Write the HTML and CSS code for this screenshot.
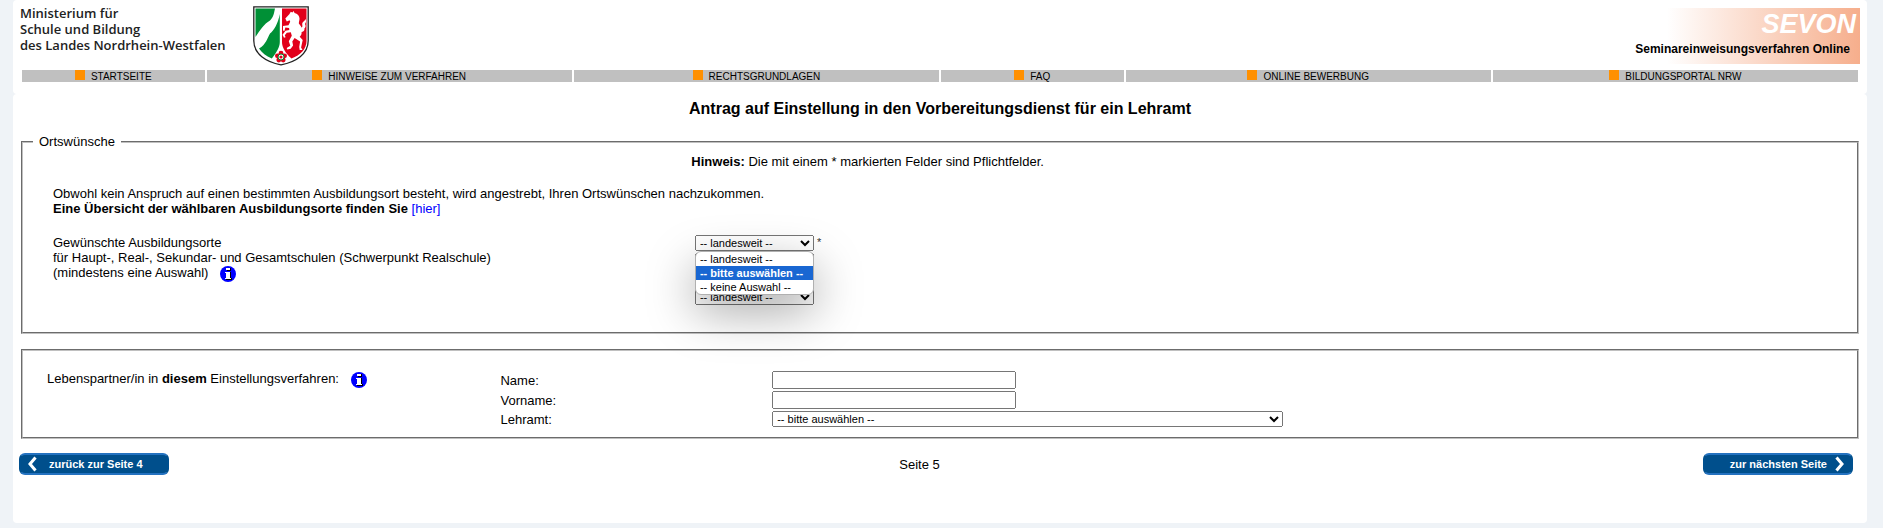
FILE: index.html
```
<!DOCTYPE html>
<html lang="de">

<head>
    <meta charset="UTF-8">
    <meta name="viewport" content="width=device-width, initial-scale=1">
    <title>SEVON - Ortswünsche</title>
    <link rel="stylesheet" href="styles.css">
</head>

<body>
    <header class="card header">
        <div class="masthead">
            <p class="ministry">Ministerium für<br>Schule und Bildung<br>des Landes Nordrhein-Westfalen</p>
            <svg class="crest" width="56" height="60" viewBox="0 0 56 60" aria-hidden="true">
                <path d="M.8.8h54.4v34C55.200 48 43 56 28 58.800 13 56 .8 48 .8 34.800z" fill="#fff" stroke="#222" stroke-width="1.300" />
                <path d="M2.500 2.500H22c-1 4-1 8-5 12C11 18 7 24 2.500 31z" fill="#009036" />
                <path d="M26.800 8v28c0 5-3 10-8 16.500C13 50 9 47 6 42.500c7-4 8-10 11-15 4-3 8-10 9.800-19.500z" fill="#009036" />
                <path d="M29 2.500h24.500V35c0 8-6 14-15 17.500C32 47 29 41 29 36z" fill="#e2001a" />
                <path d="M32.300 12.500l4-4.300 1.500-2.400 1.500.8 1.500-1.500.7 2c3 .5 5 3 5 5.500 0 2-.8 3.500-.6 5.200 1 1.200 2 2 2.500 3.800 2-1 .3-3 1-4.600.5-1.800 2.600-1.800 3-4 1.200 2 .6 3.500-.4 5 1 1.500.8 3.500-.6 4.500.4 1.700-.7 3.500-2.800 3.400.2 2-.6 3.600-1.900 4.800l3 3.300-1.600 7.500 1.400 2.500h-2.800l-.5-3 .9-5.500-5.500-3.500-2.300 3.400.8 4-2.400 3.300-3.400.8-.6-1.600 3.600-2.200-1.500-4.500 3-5.500-1-3.500-4 .6-2 2.500.8 2-1.600.4-1.500-3 3-4 3.800-.7-.2-2-3.700-.5-1 3.500-1.400-.4v-4.500l5.500-.8 1.700-3.500-.6-1.500-2.800 1.200z" fill="#fff" />
                <g fill="#e2001a">
                    <circle cx="28" cy="47.200" r="2.400" />
                    <circle cx="31.600" cy="49.800" r="2.400" />
                    <circle cx="30.200" cy="54" r="2.400" />
                    <circle cx="25.800" cy="54" r="2.400" />
                    <circle cx="24.400" cy="49.800" r="2.400" />
                </g>
                <circle cx="28" cy="51" r="3" fill="#fff" stroke="#009036" />
                <circle cx="28" cy="51" r="1.600" fill="#e2001a" />
            </svg>
            <div class="banner">
                <div class="banner-name">SEVON</div>
                <div class="banner-sub">Seminareinweisungsverfahren Online</div>
            </div>
        </div>
        <nav class="menu">
            <a href="#">STARTSEITE</a>
            <a href="#">HINWEISE ZUM VERFAHREN</a>
            <a href="#">RECHTSGRUNDLAGEN</a>
            <a href="#">FAQ</a>
            <a href="#">ONLINE BEWERBUNG</a>
            <a href="#">BILDUNGSPORTAL NRW</a>
        </nav>
    </header>

    <main class="card content">
        <h1>Antrag auf Einstellung in den Vorbereitungsdienst für ein Lehramt</h1>
        <form>
            <fieldset class="places">
                <legend>Ortswünsche</legend>
                <div class="places-body">
                    <p class="hint"><b>Hinweis:</b> Die mit einem * markierten Felder sind Pflichtfelder.</p>
                    <p class="intro">Obwohl kein Anspruch auf einen bestimmten Ausbildungsort besteht, wird angestrebt, Ihren Ortswünschen nachzukommen.<br>
                        <b>Eine Übersicht der wählbaren Ausbildungsorte finden Sie</b> <a href="#">[hier]</a></p>
                    <div class="places-row">
                        <div class="places-label">
                            <label for="ort1">Gewünschte Ausbildungsorte<br>
                                für Haupt-, Real-, Sekundar- und Gesamtschulen (Schwerpunkt Realschule)<br>
                                (mindestens eine Auswahl)</label>
                            <svg class="info" width="16" height="16" viewBox="0 0 16 16" aria-hidden="true">
                                <circle cx="8" cy="8" r="8" fill="#00f" />
                                <path d="M7 2h4v3H7zM6 6h5v6h1v2H6v-2h1V8H6z" fill="#000" />
                                <path d="M6 2h4v2H6zM5 6h5v6h1v1H5v-1h1V7H5z" fill="#fff" />
                            </svg>
                        </div>
                        <div class="places-selects">
                            <div class="required">
                                <select id="ort1">
                                    <option>-- landesweit --</option>
                                    <option>-- bitte auswählen --</option>
                                    <option>-- keine Auswahl --</option>
                                </select>
                                <span class="star">*</span>
                            </div>
                            <select aria-label="2. Ausbildungsort"><option>-- landesweit --</option></select>
                            <select aria-label="3. Ausbildungsort"><option>-- landesweit --</option></select>
                            <select aria-label="4. Ausbildungsort"><option>-- landesweit --</option></select>
                            <ul class="popup" role="listbox">
                                <li role="option">-- landesweit --</li>
                                <li role="option" class="active" aria-selected="true">-- bitte auswählen --</li>
                                <li role="option">-- keine Auswahl --</li>
                            </ul>
                        </div>
                    </div>
                </div>
            </fieldset>

            <fieldset class="partner">
                <div class="partner-row">
                    <div class="partner-title">Lebenspartner/in in <b>diesem</b> Einstellungsverfahren:
                        <svg class="info" width="16" height="16" viewBox="0 0 16 16" aria-hidden="true">
                            <circle cx="8" cy="8" r="8" fill="#00f" />
                            <path d="M7 2h4v3H7zM6 6h5v6h1v2H6v-2h1V8H6z" fill="#000" />
                            <path d="M6 2h4v2H6zM5 6h5v6h1v1H5v-1h1V7H5z" fill="#fff" />
                        </svg>
                    </div>
                    <label for="name">Name:</label>
                    <input type="text" id="name">
                    <label for="vorname">Vorname:</label>
                    <input type="text" id="vorname">
                    <label for="lehramt">Lehramt:</label>
                    <select id="lehramt"><option>-- bitte auswählen --</option></select>
                </div>
            </fieldset>

            <div class="pager">
                <button type="button" class="btn back">
                    <svg width="10" height="16" viewBox="0 0 10 16" aria-hidden="true"><path d="M8.500 1.500L3 8l5.500 6.500" /></svg>
                    zurück zur Seite 4
                </button>
                <span>Seite 5</span>
                <button type="button" class="btn next">
                    zur nächsten Seite
                    <svg width="10" height="16" viewBox="0 0 10 16" aria-hidden="true"><path d="M1.500 1.500L7 8l-5.500 6.500" /></svg>
                </button>
            </div>
        </form>
    </main>
</body>

</html>
```
FILE: styles.css
```
* {
    box-sizing: border-box;
}

body {
    margin: 0;
    padding: 0 16px 5px 13px;
    background: #eff3f7;
    color: #000;
    font-family: Arial, "Liberation Sans", sans-serif;
    font-size: 13px;
    line-height: 15px;
}

p {
    margin: 0;
}

.card {
    background: #fff;
    border-radius: 4px;
}

/* header */
.header {
    padding: 5px 7px 12px;
}

.masthead {
    display: flex;
    align-items: flex-start;
    height: 65px;
}

.ministry {
    width: 233px;
    font: 600 13px/16px "Open Sans", sans-serif;
    color: #222;
}

.crest {
    margin-top: 1px;
}

.banner {
    width: 420px;
    height: 56px;
    margin: 3px 0 0 auto;
    padding-right: 4px;
    background: linear-gradient(to right, #fff 54%, #f6ae8c);
    text-align: right;
}

.banner-name {
    color: #fff;
    font-size: 27px;
    line-height: 33px;
    font-weight: bold;
    font-style: italic;
}

.banner-sub {
    padding-right: 6px;
    font-size: 12px;
    font-weight: bold;
    line-height: 17px;
}

.menu {
    display: grid;
    grid-template-columns: 1fr 2fr 2fr 1fr 2fr 2fr;
    gap: 2px;
    margin: 0 2px;
}

.menu a {
    display: flex;
    justify-content: center;
    gap: 6px;
    height: 12px;
    background: #c0c0c0;
    color: #000;
    font-size: 10px;
    line-height: 13px;
    text-decoration: none;
}

.menu a::before {
    content: "";
    width: 10px;
    height: 10px;
    background: #ff9000;
}

/* form */
.content {
    padding: 6px 8px 48px;
}

h1 {
    margin: 0 0 16px;
    font-size: 16px;
    line-height: 18px;
    text-align: center;
}

fieldset {
    margin: 0;
    padding: 0;
    border: 2px groove #c0c0c0;
}

legend {
    margin-left: 10px;
    padding: 0 6px;
}

select {
    width: 119px;
    height: 16px;
    margin: 0;
    font: 11px Arial, "Liberation Sans", sans-serif;
}

.places {
    padding-bottom: 27px;
}

.places-body {
    width: 92%;
    padding: 5px 28px 0 30px;
}

.hint {
    text-align: center;
}

.intro {
    margin: 17px 0 19px;
}

.intro a {
    color: #00f;
    text-decoration: none;
}

.places-row {
    display: grid;
    grid-template-columns: 39.4% 1fr;
}

.info {
    margin-left: 8px;
    vertical-align: middle;
}

.places-selects {
    position: relative;
    display: flex;
    flex-direction: column;
    align-items: flex-start;
    gap: 2px;
}

.required {
    display: flex;
    gap: 3px;
    height: 16px;
}

.star {
    font-size: 11px;
    line-height: 14px;
    color: #333;
}

.popup {
    position: absolute;
    top: 16px;
    left: 0;
    width: 119px;
    margin: 0;
    padding: 0;
    list-style: none;
    overflow: hidden;
    border: 1px solid #b0b0b0;
    border-radius: 6px;
    background: #fff;
    box-shadow: 0 16px 48px rgba(0, 0, 0, 0.36);
    font-size: 11px;
    line-height: 14px;
}

.popup li {
    padding-left: 4px;
    white-space: nowrap;
}

.popup .active {
    background: #1967d2;
    color: #fff;
    font-weight: bold;
}

.partner {
    margin-top: 15px;
    padding: 20px 24px 10px;
}

.partner-row {
    display: grid;
    grid-template-columns: 454fr 272fr 1062fr;
    grid-template-rows: 18px 18px 16px;
    row-gap: 2px;
    align-items: center;
}

.partner-title {
    grid-row: 1 / 4;
    align-self: start;
}

.partner input {
    width: 244px;
    height: 18px;
    padding: 1px 2px;
}

.partner select {
    width: 511px;
}

.pager {
    display: grid;
    grid-template-columns: 48% auto 1fr;
    align-items: center;
    margin: 14px 6px 0 -2px;
}

.btn {
    display: flex;
    align-items: center;
    width: 150px;
    height: 22px;
    padding: 0 8px;
    border: 2px solid #004f8c;
    border-color: #2472c0 #00508f;
    border-radius: 6px;
    background: #004f8c;
    color: #fff;
    font: bold 11px Arial, "Liberation Sans", sans-serif;
    white-space: nowrap;
}

.btn path {
    fill: none;
    stroke: #fff;
    stroke-width: 3;
}

.back {
    gap: 12px;
    padding-left: 6px;
}

.next {
    justify-self: end;
    justify-content: flex-end;
    gap: 8px;
    padding-right: 6px;
}
```
